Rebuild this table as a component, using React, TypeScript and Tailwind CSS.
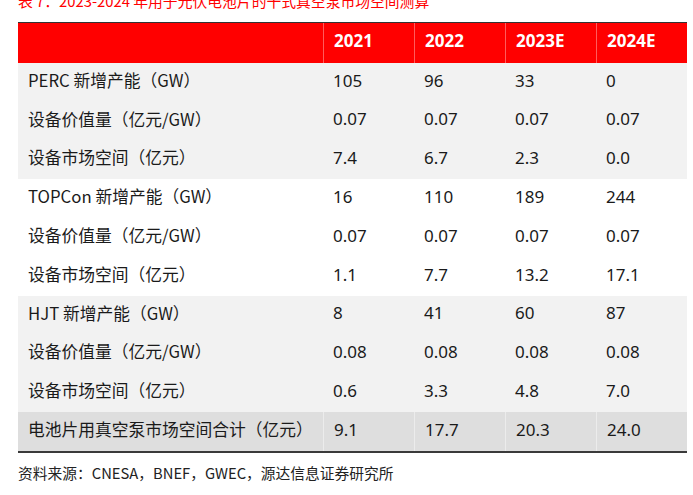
import React from "react";

type Row = { label: string; values: string[]; bg: string };

const rows: Row[] = [
  { label: "PERC 新增产能（GW）", values: ["105", "96", "33", "0"], bg: "bg-[#f2f2f2]" },
  { label: "设备价值量（亿元/GW）", values: ["0.07", "0.07", "0.07", "0.07"], bg: "bg-[#f2f2f2]" },
  { label: "设备市场空间（亿元）", values: ["7.4", "6.7", "2.3", "0.0"], bg: "bg-[#f2f2f2]" },
  { label: "TOPCon 新增产能（GW）", values: ["16", "110", "189", "244"], bg: "bg-white" },
  { label: "设备价值量（亿元/GW）", values: ["0.07", "0.07", "0.07", "0.07"], bg: "bg-white" },
  { label: "设备市场空间（亿元）", values: ["1.1", "7.7", "13.2", "17.1"], bg: "bg-white" },
  { label: "HJT 新增产能（GW）", values: ["8", "41", "60", "87"], bg: "bg-[#f2f2f2]" },
  { label: "设备价值量（亿元/GW）", values: ["0.08", "0.08", "0.08", "0.08"], bg: "bg-[#f2f2f2]" },
  { label: "设备市场空间（亿元）", values: ["0.6", "3.3", "4.8", "7.0"], bg: "bg-[#f2f2f2]" },
  { label: "电池片用真空泵市场空间合计（亿元）", values: ["9.1", "17.7", "20.3", "24.0"], bg: "bg-[#dedede]" },
];

const years = ["2021", "2022", "2023E", "2024E"];

export default function App() {
  return (
    <div className="flex flex-col w-[693px] h-[495px] overflow-hidden bg-white">
      <div className="-mt-[5.8px] ml-[18px] h-[14.8px] leading-none text-[14.8px] text-[#ff0000] whitespace-nowrap [font-family:'Noto_Sans_CJK_SC',sans-serif]">
        表 7：2023-2024 年用于光伏电池片的干式真空泵市场空间测算
      </div>

      <div className="mt-[13px] ml-[18px] w-[669px] border-t border-[#333333] border-b-2 border-b-[#3a3a3a]">
        <div className="grid grid-cols-[305px_91px_91px_91px_91px] h-[40px] bg-[#ff0000]">
          <div />
          {years.map((y) => (
            <div
              key={y}
              className="flex items-center pl-[10px] pb-[5px] border-l border-[#ff5c5c] text-white font-bold text-[17px] [font-family:'Noto_Sans',sans-serif]"
            >
              {y}
            </div>
          ))}
        </div>
        {rows.map((r, i) => (
          <div
            key={i}
            className={`grid grid-cols-[305px_91px_91px_91px_91px] h-[38.8px] ${r.bg}`}
          >
            <div className="flex items-center pl-[10px] pb-[4px] text-[16.75px] text-[#1a1a1a] whitespace-nowrap [font-family:'Noto_Sans_CJK_SC',sans-serif]">
              {r.label}
            </div>
            {r.values.map((v, j) => (
              <div
                key={j}
                className={`flex items-center pl-[10px] pb-[4px] text-[17px] text-[#1a1a1a] [font-family:'Noto_Sans','Noto_Sans_CJK_SC',sans-serif] ${
                  i === rows.length - 1 ? "border-l border-[#ececec]" : ""
                }`}
              >
                {v}
              </div>
            ))}
          </div>
        ))}
      </div>

      <div className="mt-[13.4px] ml-[18px] h-[14.75px] leading-none text-[14.75px] text-[#222222] whitespace-nowrap [font-family:'Noto_Sans_CJK_SC',sans-serif]">
        资料来源：CNESA，BNEF，GWEC，源达信息证券研究所
      </div>
    </div>
  );
}
